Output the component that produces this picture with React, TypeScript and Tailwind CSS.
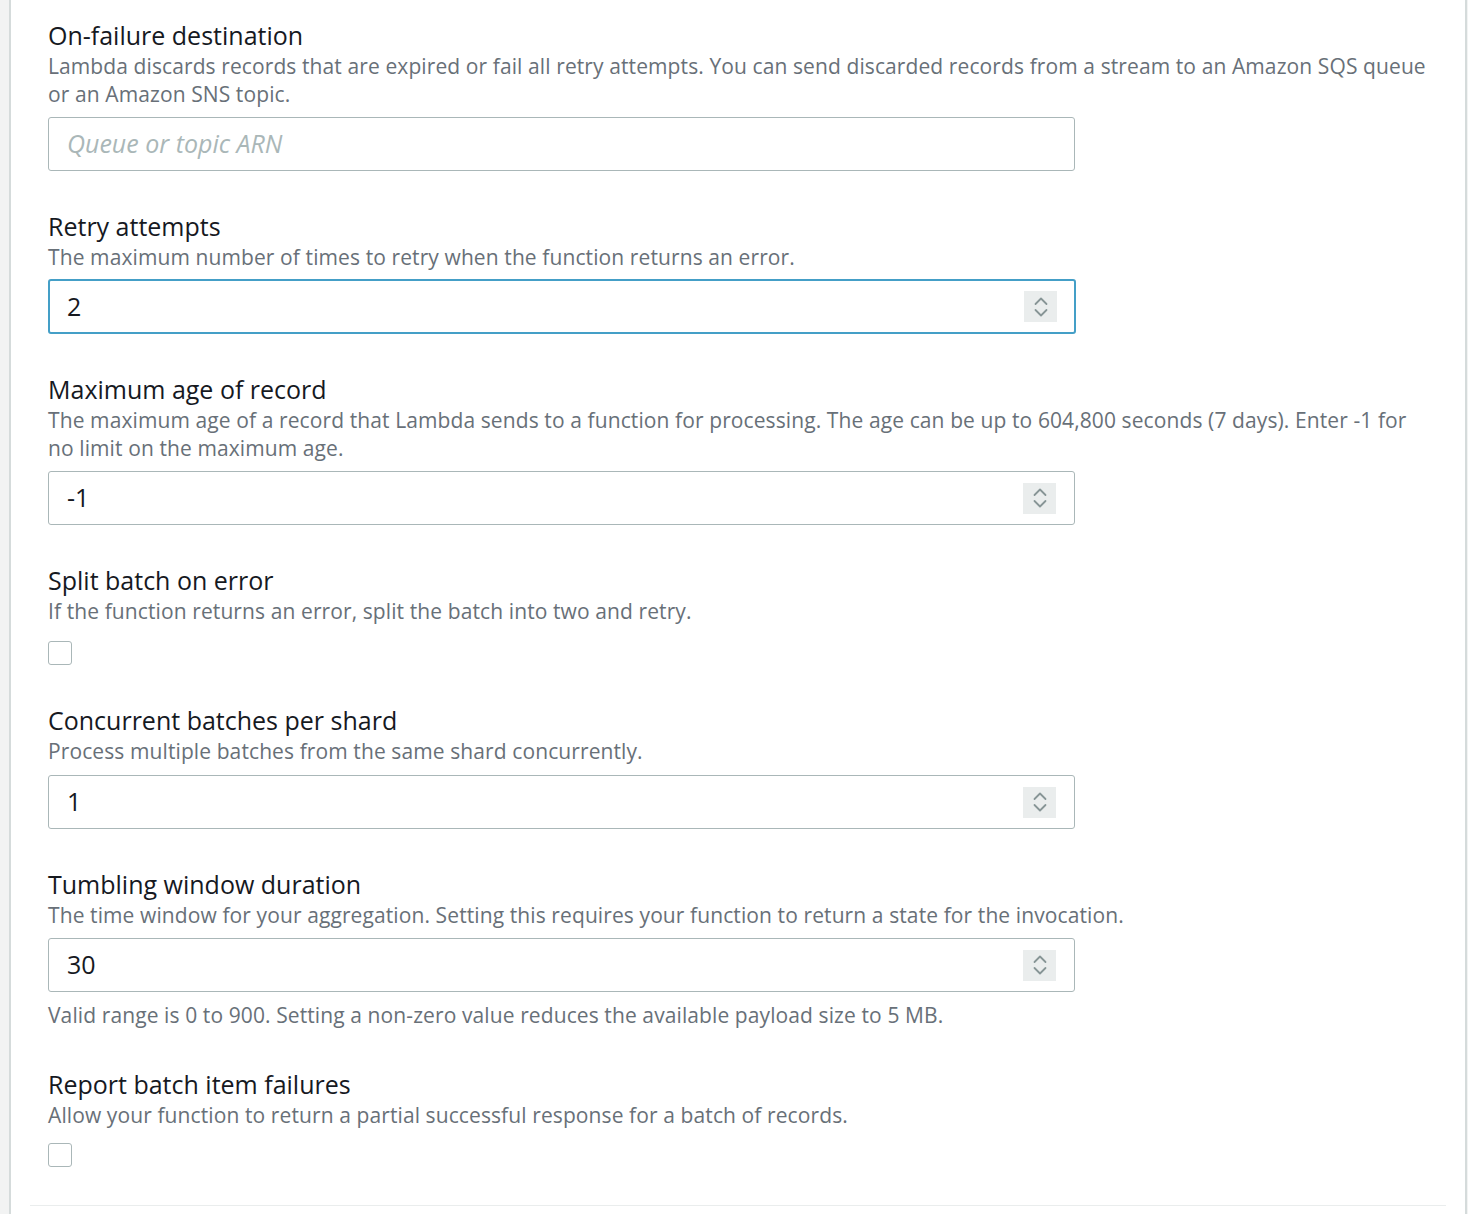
import React from "react"

const font = { fontFamily: "'Open Sans', 'Noto Sans', sans-serif" }

function Spinner() {
  return (
    <span className="flex h-[31px] w-[33px] shrink-0 items-center justify-center bg-[#eaeded]">
      <svg width="16" height="24" viewBox="0 0 16 24" fill="none" stroke="#879596" strokeWidth="1.8" strokeLinecap="round" strokeLinejoin="round">
        <path d="M2.5 9 L8 3.5 L13.5 9" />
        <path d="M2.5 15 L8 20.5 L13.5 15" />
      </svg>
    </span>
  )
}

function NumberBox({ value, focused, mt = "mt-2" }: { value: string; focused?: boolean; mt?: string }) {
  return (
    <div
      className={
        (focused
          ? "flex h-[55px] w-[1028px] items-center rounded-[3px] border-2 border-[#449fc7] px-[17px] "
          : "flex h-[54px] w-[1027px] items-center rounded-[3px] border border-[#aab7b8] px-[18px] ") + mt
      }
    >
      <input
        readOnly
        value={value}
        className="min-w-0 flex-1 bg-transparent text-[25px] text-[#16191f] outline-none"
        style={font}
      />
      <Spinner />
    </div>
  )
}

function Field({ title, desc, children }: { title: string; desc: string; children: React.ReactNode }) {
  return (
    <div className="flex flex-col">
      <h3 className="text-[25px] leading-[34px] text-[#16191f]">{title}</h3>
      <p className="text-[21px] leading-[28px] tracking-[0.1px] text-[#687078]">{desc}</p>
      {children}
    </div>
  )
}

export default function App() {
  return (
    <div className="h-[1214px] w-[1468px] overflow-hidden bg-[#f2f3f3] pl-[9px]" style={font}>
      <div className="h-full w-[1458px] border-x-2 border-[#d5dbdb] bg-white px-[19px] pt-[18px]">
        <div className="flex flex-col gap-[38px] px-[18px]">
          <Field
            title="On-failure destination"
            desc="Lambda discards records that are expired or fail all retry attempts. You can send discarded records from a stream to an Amazon SQS queue or an Amazon SNS topic."
          >
            <div className="mt-[9px] flex h-[54px] w-[1027px] items-center rounded-[3px] border border-[#aab7b8] px-[18px]">
              <input
                readOnly
                placeholder="Queue or topic ARN"
                className="w-full bg-transparent text-[25px] italic text-[#16191f] outline-none placeholder:text-[#aab7b8]"
                style={font}
              />
            </div>
          </Field>

          <Field title="Retry attempts" desc="The maximum number of times to retry when the function returns an error.">
            <NumberBox value="2" focused />
          </Field>

          <Field
            title="Maximum age of record"
            desc="The maximum age of a record that Lambda sends to a function for processing. The age can be up to 604,800 seconds (7 days). Enter -1 for no limit on the maximum age."
          >
            <NumberBox value="-1" mt="mt-[9px]" />
          </Field>

          <Field title="Split batch on error" desc="If the function returns an error, split the batch into two and retry.">
            <div className="mt-[16px] h-[24px] w-[24px] rounded-[3px] border-[1.5px] border-[#aab7b8] bg-white" />
          </Field>

          <Field title="Concurrent batches per shard" desc="Process multiple batches from the same shard concurrently.">
            <NumberBox value="1" mt="mt-[10px]" />
          </Field>

          <Field
            title="Tumbling window duration"
            desc="The time window for your aggregation. Setting this requires your function to return a state for the invocation."
          >
            <NumberBox value="30" mt="mt-[9px]" />
            <p className="mt-[9px] text-[21px] leading-[28px] tracking-[0.1px] text-[#687078]">
              Valid range is 0 to 900. Setting a non-zero value reduces the available payload size to 5 MB.
            </p>
          </Field>

          <Field title="Report batch item failures" desc="Allow your function to return a partial successful response for a batch of records.">
            <div className="mt-[14px] h-[24px] w-[24px] rounded-[3px] border-[1.5px] border-[#aab7b8] bg-white" />
          </Field>
        </div>
        <div className="mt-[38px] border-t border-[#eaeded]" />
      </div>
    </div>
  )
}
